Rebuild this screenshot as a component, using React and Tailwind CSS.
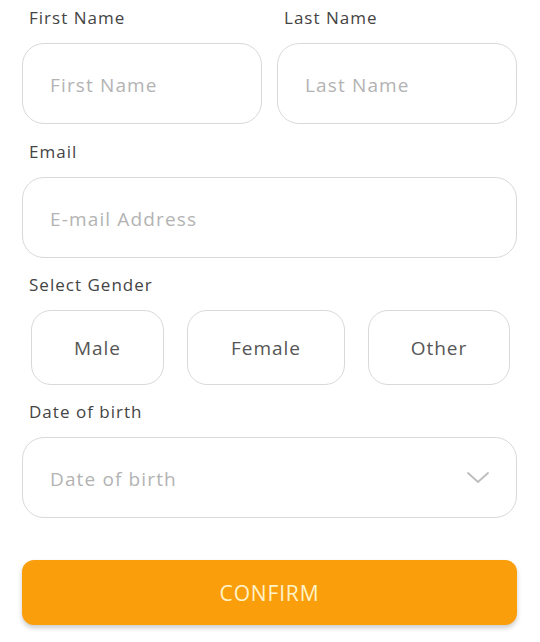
import { useState } from "react";

const font = { fontFamily: '"Open Sans", "Noto Sans", sans-serif' };

function Label({ children }) {
  return (
    <div className="pl-[7px] text-[17px] leading-[22px] tracking-[0.06em] text-[#444444] mb-[14px]">
      {children}
    </div>
  );
}

function TextBox({ placeholder }) {
  return (
    <div className="h-[81px] rounded-[22px] border border-[#d9d9d9] bg-white flex items-center px-[27px] pt-[3px]">
      <input
        placeholder={placeholder}
        className="w-full bg-transparent outline-none text-[19px] tracking-[0.06em] text-[#555] placeholder:text-[#b3b3b3]"
        style={font}
      />
    </div>
  );
}

export default function App() {
  const [gender, setGender] = useState(null);
  const genders = [
    { name: "Male", w: "w-[133px]" },
    { name: "Female", w: "w-[158px]" },
    { name: "Other", w: "w-[142px]" },
  ];

  return (
    <div className="min-h-[642px] bg-white px-[22px] pr-[23px] pt-[7px]" style={font}>
      <div className="grid grid-cols-2 gap-[15px]">
        <div>
          <Label>First Name</Label>
          <TextBox placeholder="First Name" />
        </div>
        <div>
          <Label>Last Name</Label>
          <TextBox placeholder="Last Name" />
        </div>
      </div>

      <div className="mt-[17px]">
        <Label>Email</Label>
        <TextBox placeholder="E-mail Address" />
      </div>

      <div className="mt-[16px]">
        <Label>Select Gender</Label>
        <div className="flex gap-[23px] pl-[9px]">
          {genders.map((g) => (
            <button
              key={g.name}
              onClick={() => setGender(g.name)}
              className={`${g.w} h-[75px] rounded-[20px] border pt-[2px] text-[19px] tracking-[0.05em] ${
                gender === g.name
                  ? "border-[#fb9e0c] text-[#fb9e0c]"
                  : "border-[#d9d9d9] text-[#555555]"
              }`}
            >
              {g.name}
            </button>
          ))}
        </div>
      </div>

      <div className="mt-[16px]">
        <Label>Date of birth</Label>
        <div className="h-[81px] rounded-[22px] border border-[#d9d9d9] flex items-center justify-between pl-[27px] pr-[27px]">
          <span className="pt-[3px] text-[19px] tracking-[0.06em] text-[#b3b3b3]">Date of birth</span>
          <svg className="mt-[1px]" width="22" height="12" viewBox="0 0 22 12" fill="none">
            <path d="M1 1l10 9 10-9" stroke="#bdbdbd" strokeWidth="1.8" strokeLinecap="round" strokeLinejoin="round" />
          </svg>
        </div>
      </div>

      <button className="mt-[42px] w-full h-[65px] rounded-[12px] bg-[#fb9e0c] pt-[3px] text-[#fff3c8] text-[21px] tracking-[0.04em] shadow-[0_3px_5px_rgba(0,0,0,0.2)]">
        CONFIRM
      </button>
    </div>
  );
}
